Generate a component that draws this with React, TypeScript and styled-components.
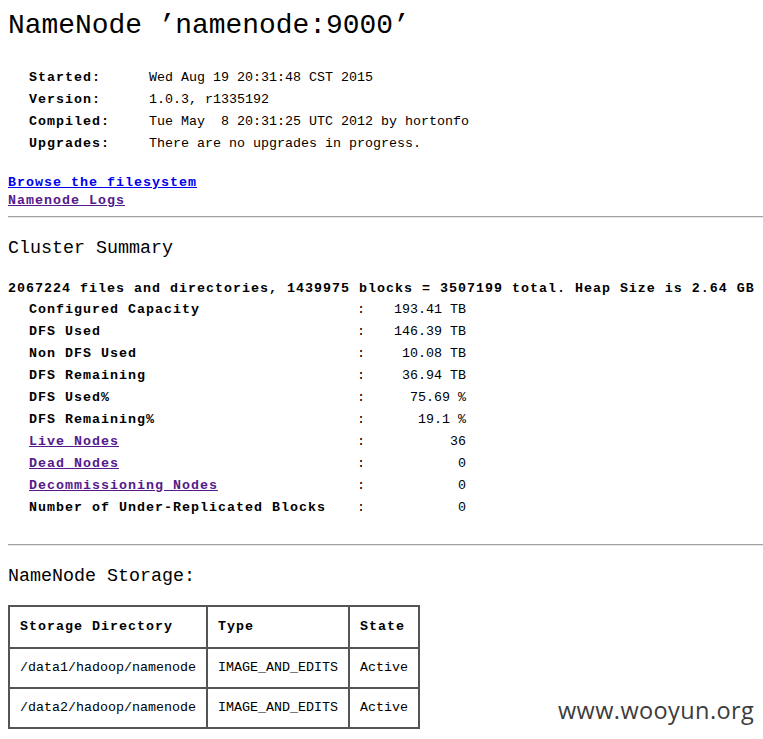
import styled, { createGlobalStyle } from 'styled-components'

const GlobalStyle = createGlobalStyle`
    html, body {
        background: #fff;
    }
    body {
        margin: 8px 0 8px 8px;
        font-family: "Liberation Mono", "DejaVu Sans Mono", monospace;
        font-size: 13.33px;
        color: #000;
    }
`

const info = [
    ['Started:', 'Wed Aug 19 20:31:48 CST 2015'],
    ['Version:', '1.0.3, r1335192'],
    ['Compiled:', 'Tue May  8 20:31:25 UTC 2012 by hortonfo'],
    ['Upgrades:', 'There are no upgrades in progress.'],
]

interface Stat {
    label: string;
    value: string;
    link?: boolean;
}

const stats: Stat[] = [
    { label: 'Configured Capacity', value: '193.41 TB' },
    { label: 'DFS Used', value: '146.39 TB' },
    { label: 'Non DFS Used', value: '10.08 TB' },
    { label: 'DFS Remaining', value: '36.94 TB' },
    { label: 'DFS Used%', value: '75.69 %' },
    { label: 'DFS Remaining%', value: '19.1 %' },
    { label: 'Live Nodes', value: '36', link: true },
    { label: 'Dead Nodes', value: '0', link: true },
    { label: 'Decommissioning Nodes', value: '0', link: true },
    { label: 'Number of Under-Replicated Blocks', value: '0' },
]

const storage = [
    ['/data1/hadoop/namenode', 'IMAGE_AND_EDITS', 'Active'],
    ['/data2/hadoop/namenode', 'IMAGE_AND_EDITS', 'Active'],
]

export default function App(){
    return(
        <Page>
            <GlobalStyle />
            <Title>NameNode ’namenode:9000’</Title>

            <InfoTable>
                {info.map(([k, v]) => (
                    <>
                        <InfoLabel key={k}>{k}</InfoLabel>
                        <InfoValue key={k + 'v'}>{v}</InfoValue>
                    </>
                ))}
            </InfoTable>

            <LinkList>
                <NavLink href="#">Browse the filesystem</NavLink>
                <NavLink href="#" $visited>Namenode Logs</NavLink>
            </LinkList>

            <Rule />

            <SectionTitle $top={18}>Cluster Summary</SectionTitle>
            <SummaryLine>
                2067224 files and directories, 1439975 blocks = 3507199 total. Heap Size is 2.64 GB
            </SummaryLine>

            <StatsGrid>
                {stats.map(s => (
                    <>
                        <StatLabel key={s.label}>
                            {s.link ? <NavLink href="#" $visited>{s.label}</NavLink> : s.label}
                        </StatLabel>
                        <StatColon key={s.label + 'c'}>:</StatColon>
                        <StatValue key={s.label + 'v'}>{s.value}</StatValue>
                    </>
                ))}
            </StatsGrid>

            <Rule $top={26} />

            <SectionTitle $top={18}>NameNode Storage:</SectionTitle>

            <StorageTable>
                <thead>
                    <tr>
                        <Th>Storage Directory</Th>
                        <Th>Type</Th>
                        <Th>State</Th>
                    </tr>
                </thead>
                <tbody>
                    {storage.map(row => (
                        <tr key={row[0]}>
                            {row.map(c => <Td key={c}>{c}</Td>)}
                        </tr>
                    ))}
                </tbody>
            </StorageTable>

            <Watermark>www.wooyun.org</Watermark>
        </Page>
    )
}

const Page = styled.div`
    position: relative;
    width: 755px;
    height: 723px;
`

const Title = styled.h1`
    margin: 0;
    padding-top: 2px;
    font-size: 27.9px;
    font-weight: normal;
    line-height: 32px;
    white-space: pre;
`

const InfoTable = styled.div`
    display: grid;
    grid-template-columns: 120px auto;
    grid-auto-rows: 22px;
    align-items: center;
    margin-top: 24px;
    padding-left: 21px;
`

const InfoLabel = styled.div`
    font-weight: bold;
    letter-spacing: 1px;
`

const InfoValue = styled.div`
    white-space: pre;
`

const LinkList = styled.div`
    display: flex;
    flex-direction: column;
    align-items: flex-start;
    margin-top: 20px;
    line-height: 18px;
`

const NavLink = styled.a<{ $visited?: boolean }>`
    color: ${p => p.$visited ? '#551a8b' : '#0000ee'};
    font-weight: bold;
    letter-spacing: 1px;
    text-decoration: underline;
`

const Rule = styled.hr<{ $top?: number }>`
    margin: ${p => p.$top ?? 6}px 0 0 0;
    border: none;
    border-top: 1px solid #a0a0a0;
    border-bottom: 1px solid #e6e6e6;
    height: 0;
`

const SectionTitle = styled.h2<{ $top: number }>`
    margin: ${p => p.$top}px 0 0 0;
    font-size: 18.33px;
    font-weight: normal;
    line-height: 26px;
`

const SummaryLine = styled.div`
    margin-top: 18px;
    font-weight: bold;
    letter-spacing: 1px;
    line-height: 18px;
    white-space: nowrap;
`

const StatsGrid = styled.div`
    display: grid;
    grid-template-columns: 328px 8px 101px;
    grid-auto-rows: 22px;
    align-items: center;
    margin-top: 0;
    padding-left: 21px;
`

const StatLabel = styled.div`
    font-weight: bold;
    letter-spacing: 1px;
`

const StatColon = styled.div`
    text-align: center;
`

const StatValue = styled.div`
    text-align: right;
`

const StorageTable = styled.table`
    margin-top: 15px;
    border-collapse: collapse;
    border: 2px solid #555;
`

const Th = styled.th`
    border: 2px solid #555;
    padding: 11px 10px;
    text-align: left;
    font-weight: bold;
    letter-spacing: 1px;
    line-height: 18px;
`

const Td = styled.td`
    border: 2px solid #555;
    padding: 10px 10px;
    line-height: 18px;
`

const Watermark = styled.div`
    position: absolute;
    left: 550px;
    top: 686px;
    font-family: "Open Sans", sans-serif;
    font-size: 23.5px;
    color: #3c3c3c;
    letter-spacing: 0.4px;
`
